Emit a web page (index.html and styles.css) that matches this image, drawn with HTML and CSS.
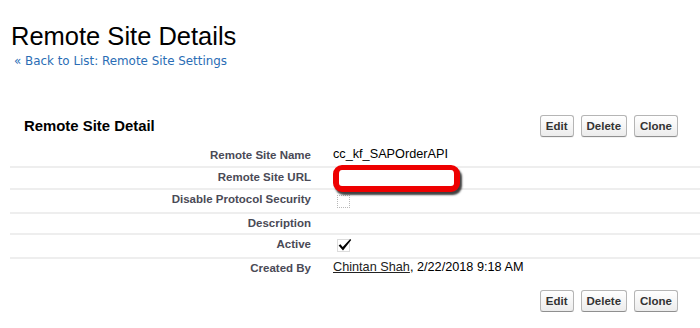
FILE: index.html
```html
<!DOCTYPE html>
<html>
<head>
<meta charset="utf-8">
<link rel="stylesheet" href="styles.css">
</head>
<body>
<div class="page">
  <h1 class="title">Remote Site Details</h1>
  <div class="back"><a href="#">« Back to List: Remote Site Settings</a></div>

  <div class="block">
    <div class="block-head">
      <h2 class="block-title">Remote Site Detail</h2>
      <div class="buttons">
        <button class="btn">Edit</button>
        <button class="btn">Delete</button>
        <button class="btn">Clone</button>
      </div>
    </div>

    <div class="rows">
      <div class="row">
        <div class="label">Remote Site Name</div>
        <div class="value">cc_kf_SAPOrderAPI</div>
      </div>
      <div class="row">
        <div class="label">Remote Site URL</div>
        <div class="value value-url"><span class="redact"></span></div>
      </div>
      <div class="row row-tall">
        <div class="label">Disable Protocol Security</div>
        <div class="value value-check"><span class="checkbox"></span></div>
      </div>
      <div class="row row-short">
        <div class="label">Description</div>
        <div class="value"></div>
      </div>
      <div class="row row-tall">
        <div class="label">Active</div>
        <div class="value value-checked">
          <svg class="checked" width="17" height="14" viewBox="0 0 17 14">
            <rect x="0.5" y="1.5" width="12" height="12" fill="none" stroke="#b8b8b8" stroke-width="1" stroke-dasharray="1 1"/>
            <path d="M1.6 7.6 L3.4 6.2 L5.7 9.1 L13.2 1.0 L14.2 1.9 L6.0 12.4 Z" fill="#000"/>
          </svg>
        </div>
      </div>
      <div class="row row-last">
        <div class="label">Created By</div>
        <div class="value"><a class="user" href="#">Chintan Shah</a>, 2/22/2018 9:18 AM</div>
      </div>
    </div>

    <div class="buttons buttons-bottom">
      <button class="btn">Edit</button>
      <button class="btn">Delete</button>
      <button class="btn">Clone</button>
    </div>
  </div>
</div>
</body>
</html>
```
FILE: styles.css
```css
html, body {
  margin: 0;
  padding: 0;
  background: #fff;
}
body {
  font-family: "Liberation Sans", Arial, sans-serif;
  color: #000;
  width: 700px;
  overflow: hidden;
}
.page {
  padding: 21px 0 0 0;
}
.title {
  margin: 0 0 0 11px;
  font-size: 25.5px;
  font-weight: normal;
  line-height: 30px;
  color: #000;
}
.back {
  margin: 3px 0 0 14px;
  font-family: "DejaVu Sans", Verdana, sans-serif;
  font-size: 11.9px;
  line-height: 14px;
}
.back a {
  color: #2a6db5;
  text-decoration: none;
}
.block {
  margin-top: 47px;
}
.block-head {
  display: flex;
  align-items: center;
  justify-content: space-between;
  height: 22px;
}
.block-title {
  margin: 0 0 0 24px;
  font-size: 14.9px;
  font-weight: bold;
  color: #000;
  line-height: 18px;
}
.buttons {
  display: flex;
  gap: 7px;
  padding-right: 22px;
  justify-content: flex-end;
}
.btn {
  height: 22px;
  padding: 0 5px;
  font-family: "Liberation Sans", Arial, sans-serif;
  font-size: 11.5px;
  font-weight: bold;
  color: #333;
  background: linear-gradient(#ffffff, #ececec);
  border: 1px solid #b5b5b5;
  border-bottom-color: #8f8f8f;
  border-radius: 3px;
  box-shadow: 0 1px 0 rgba(0,0,0,0.05);
}
.rows {
  margin: 9px 0 0 10px;
}
.row {
  display: grid;
  grid-template-columns: 323px 1fr;
  align-items: start;
  height: 20px;
  border-bottom: 2px solid #eeeeee;
}
.row-tall {
  height: 22px;
}
.row-short {
  height: 19px;
}
.row-last {
  border-bottom: none;
}
.label {
  padding: 2px 22px 0 0;
  text-align: right;
  font-size: 11.5px;
  font-weight: bold;
  line-height: 15px;
  color: #4a4a56;
}
.value {
  padding-top: 1px;
  font-size: 12.7px;
  line-height: 15px;
  color: #000;
}
.value-url {
  position: relative;
  height: 16px;
}
.redact {
  position: absolute;
  left: 0;
  top: -3px;
  width: 115px;
  height: 16px;
  background: #fff;
  border: 6px solid #ee0000;
  border-top-width: 5px;
  border-radius: 9px;
  box-shadow: 2px 3px 2px rgba(0, 0, 0, 0.75);
}
.value-check {
  padding: 5px 0 0 4px;
}
.checkbox {
  display: block;
  width: 11px;
  height: 11px;
  border: 1px dotted #b8b8b8;
}
.value-checked {
  padding: 3px 0 0 4px;
}
.checked {
  display: block;
}
.user {
  color: #222;
  text-decoration: underline;
}
.buttons-bottom {
  margin-top: 11px;
}
```
